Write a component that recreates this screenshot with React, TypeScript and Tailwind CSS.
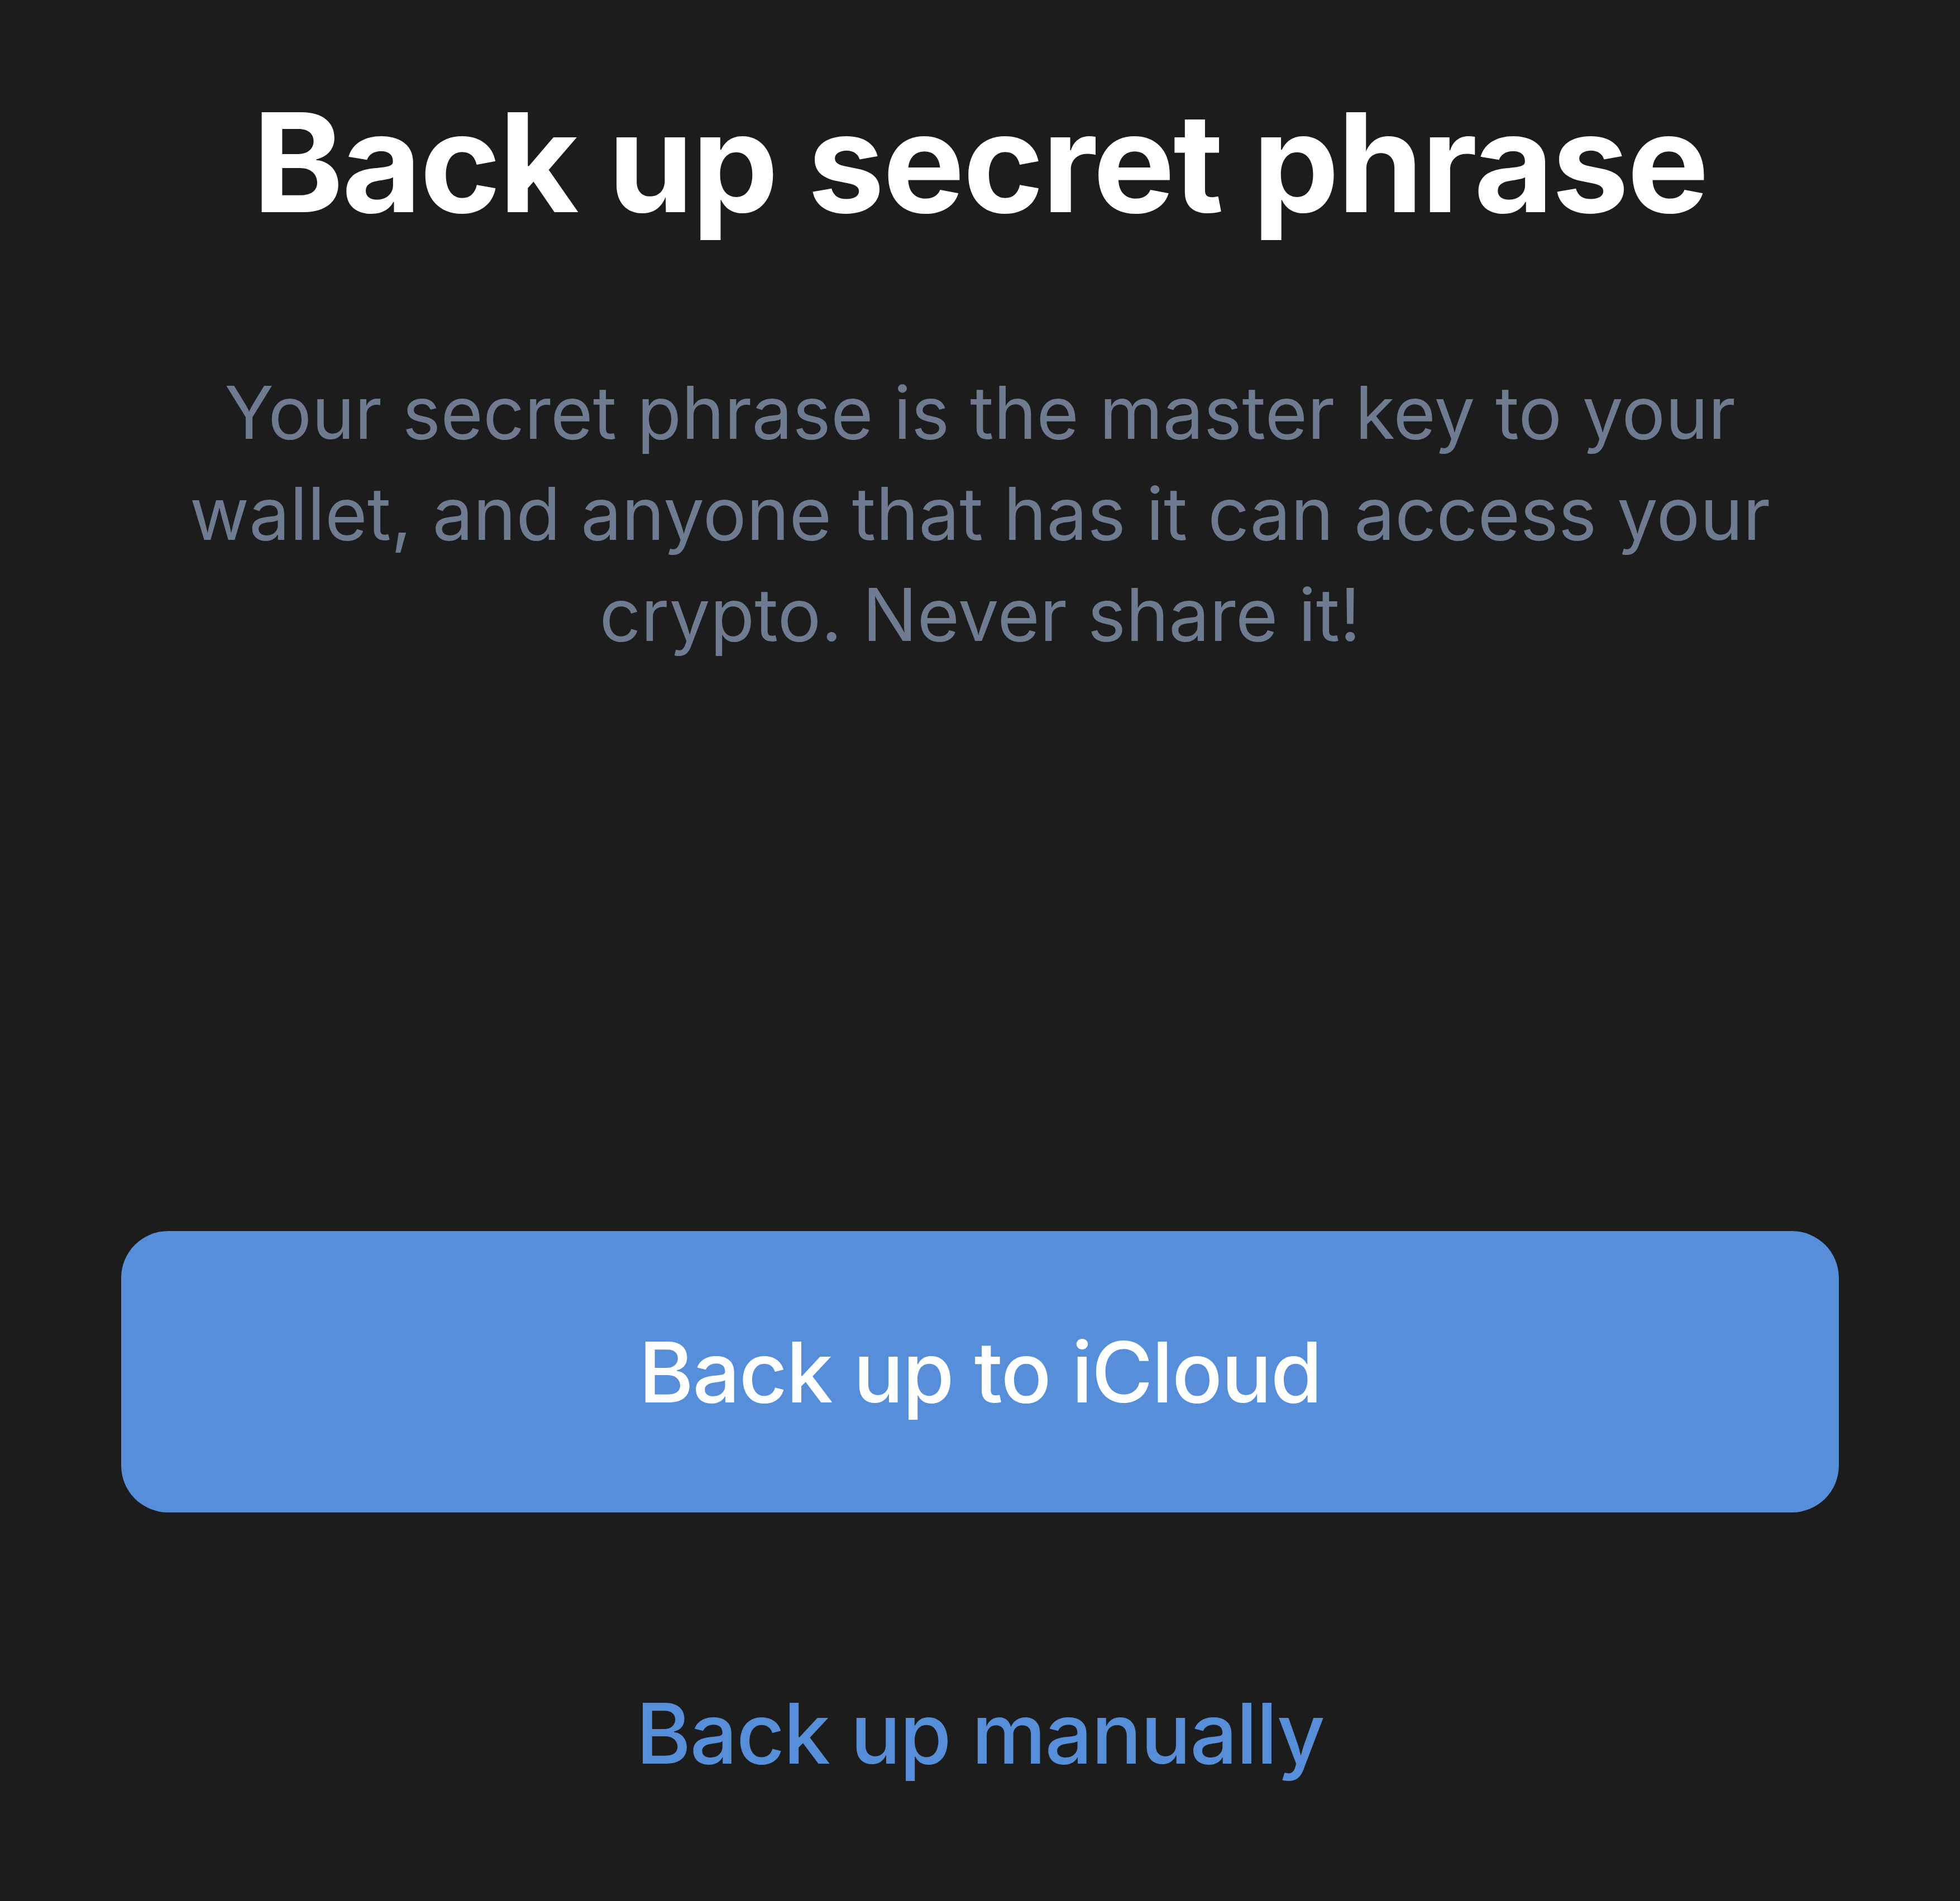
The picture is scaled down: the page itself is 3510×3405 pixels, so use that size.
export default function App() {
    return (
        <div
            className="min-h-[3405px] w-full bg-[#1c1c1c] flex flex-col items-center text-center"
            style={{ fontFamily: "Inter, 'Noto Sans', 'Liberation Sans', sans-serif" }}
        >
            {/* ── Header ── */}
            <h1 className="pt-[141px] text-[246px] leading-[300px] font-bold text-white tracking-[-3px]">
                Back up secret phrase
            </h1>

            <p className="mt-[207px] text-[130px] leading-[181px] text-[#6e7b91]">
                Your secret phrase is the master key to your
                <br />
                wallet, and anyone that has it can access your
                <br />
                crypto. Never share it!
            </p>

            {/* ── Actions ── */}
            <div className="mt-[1014px] w-full px-[217px]">
                <button className="w-full h-[504px] rounded-[84px] bg-[#568ed9] text-white text-[150px] font-medium tracking-[-2px]">
                    Back up to iCloud
                </button>
            </div>

            <button className="mt-[300px] text-[150px] leading-[192px] font-medium tracking-[-2px] text-[#568ed9]">
                Back up manually
            </button>
        </div>
    );
}
